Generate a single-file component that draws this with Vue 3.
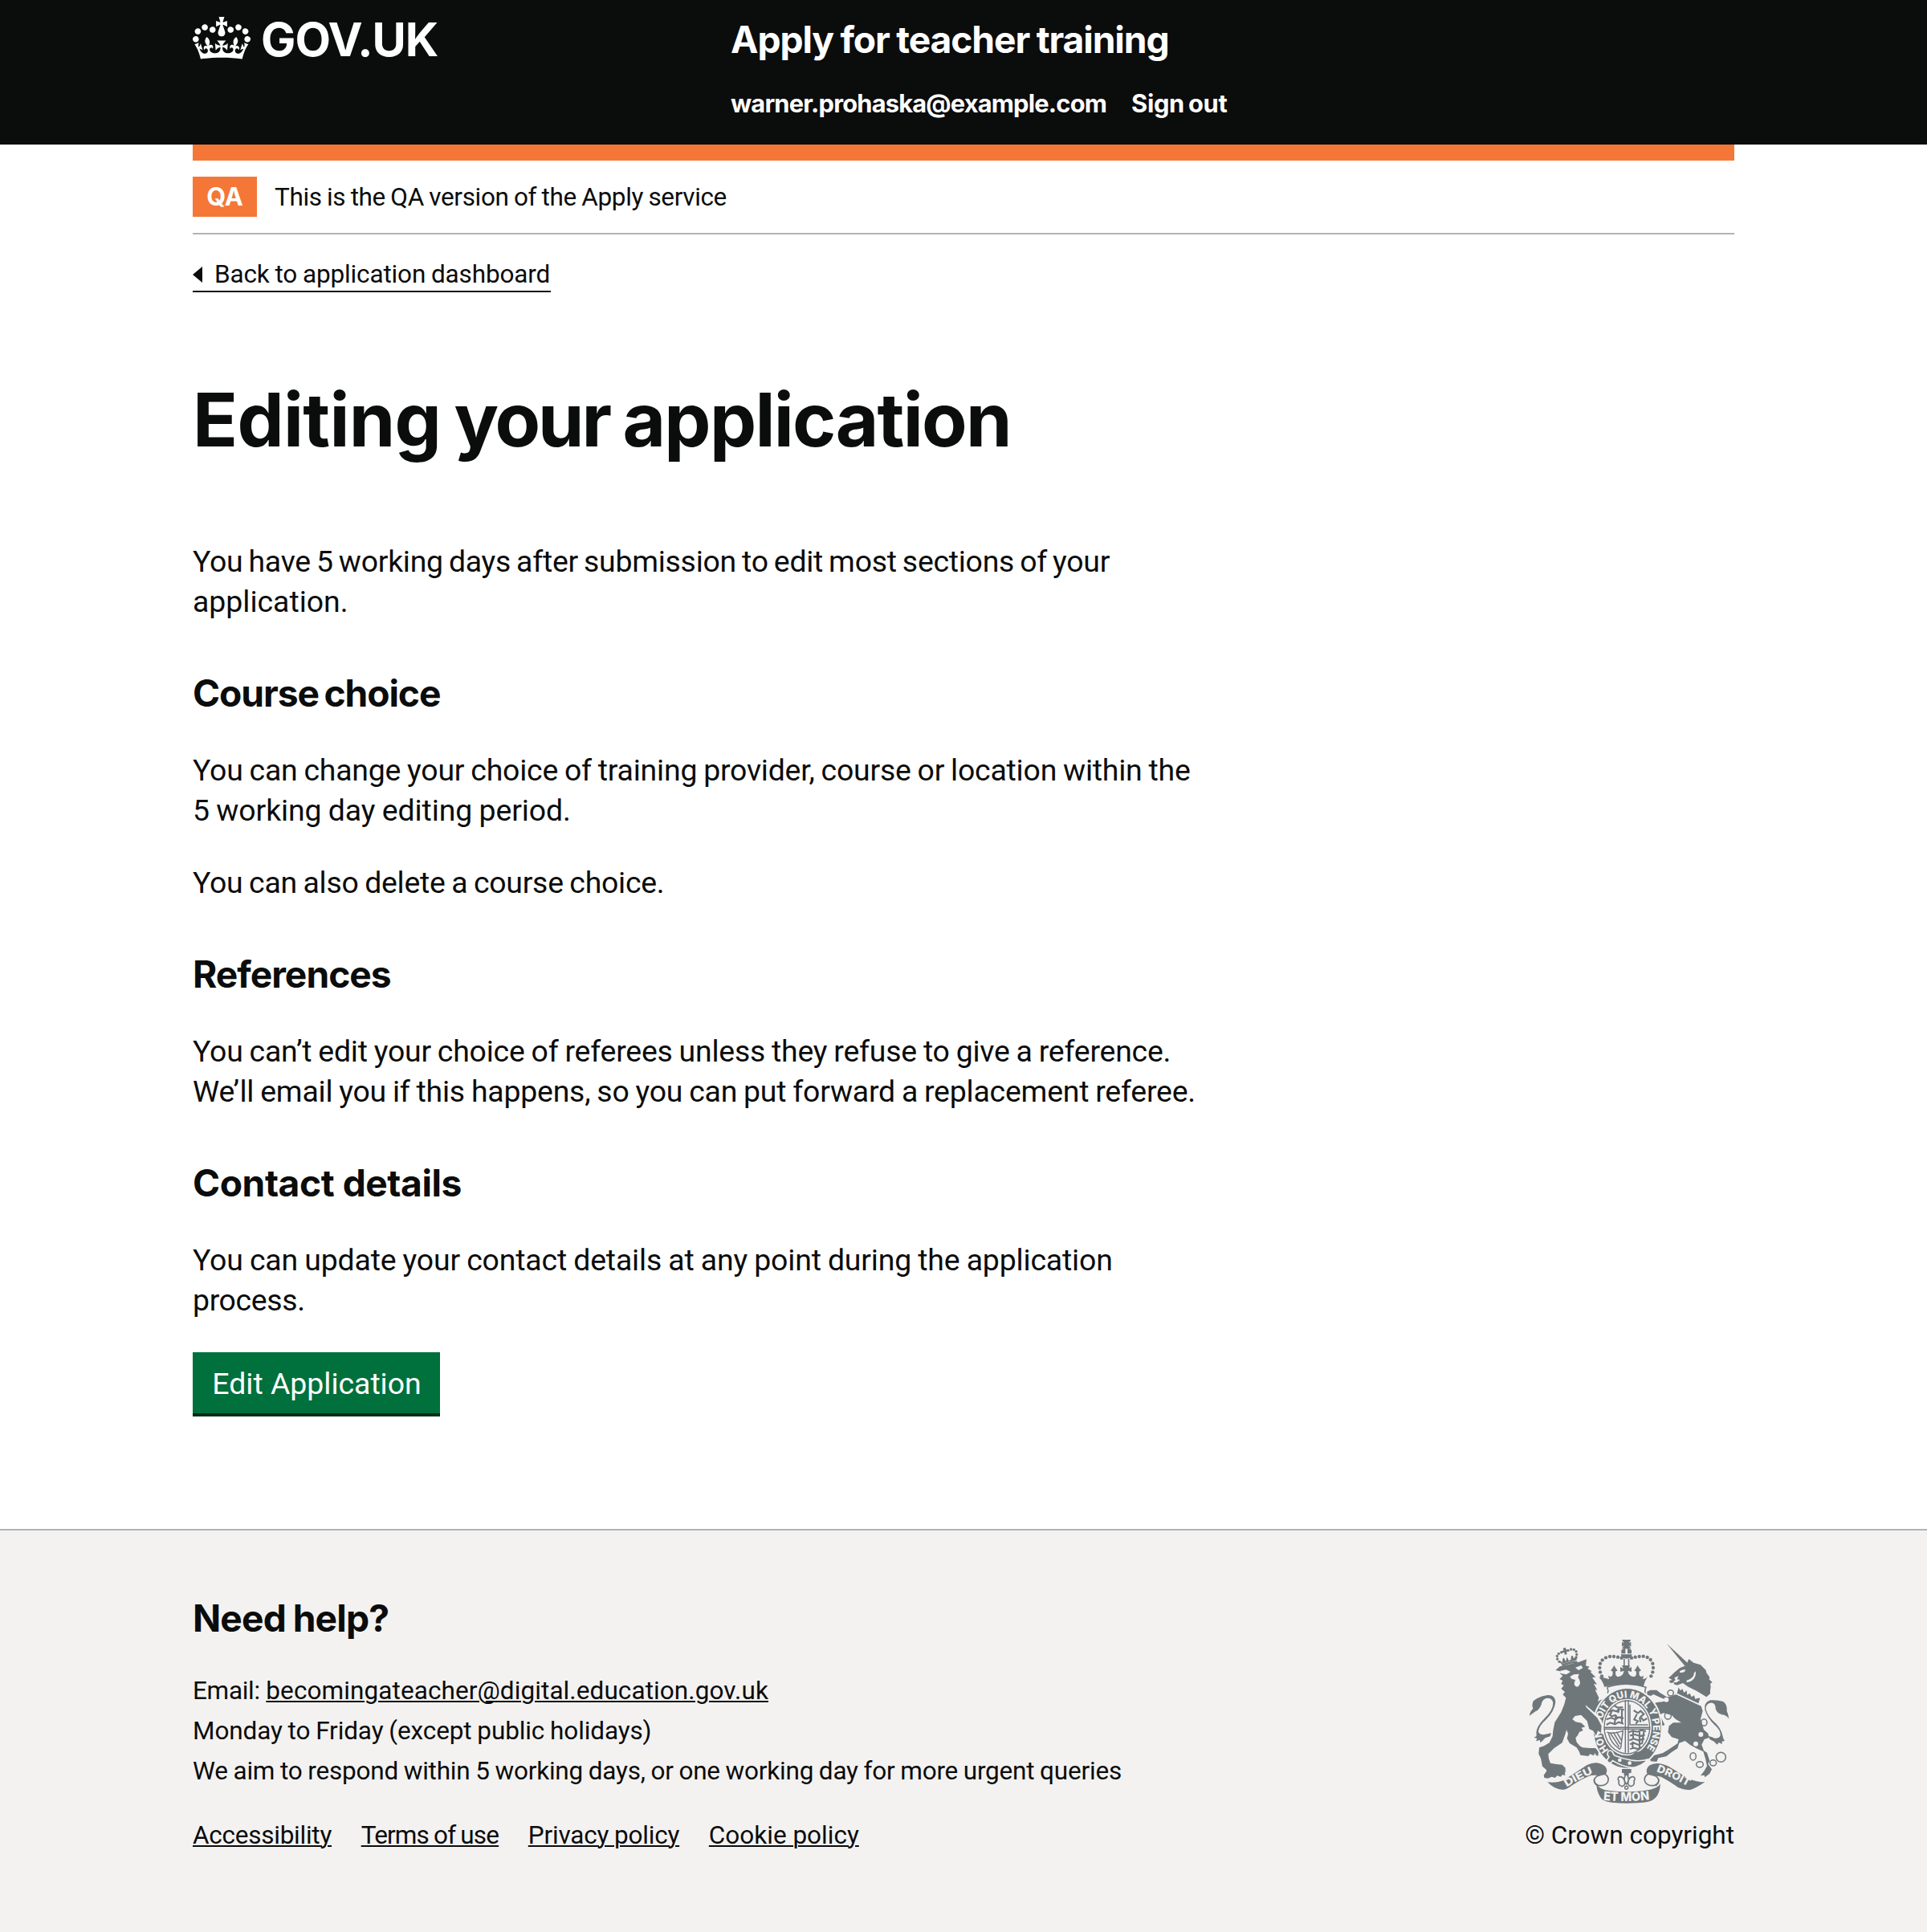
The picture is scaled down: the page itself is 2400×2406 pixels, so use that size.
<script setup>
const footerLinks = [
  { label: 'Accessibility', cls: 'link-accessibility' },
  { label: 'Terms of use', cls: 'link-terms' },
  { label: 'Privacy policy', cls: 'link-privacy' },
  { label: 'Cookie policy', cls: 'link-cookie' }
]

// Pearls along the two arches of the large crown.
const pearls = [
  [345, 202], [339, 187], [337, 171], [339, 155], [347, 142], [360, 133], [375, 129], [390, 129], [405, 131],
  [419, 134], [456, 134], [470, 131], [485, 129], [500, 128], [515, 132], [527, 141], [535, 155], [537, 171], [535, 187], [529, 202]
]
// Pearls of the lion's crown.
const smallPearls = [[186, 148], [179, 138], [178, 127], [184, 118], [194, 113], [219, 106], [230, 102], [241, 103], [249, 110], [251, 121], [249, 132]]
// Links of the unicorn's chain: cx, cy, rx, ry.
const chain = [[602, 265, 11, 11], [592, 350, 12, 13], [727, 375, 11, 13], [686, 502, 11, 14], [711, 532, 13, 11], [761, 526, 12, 11], [790, 505, 18, 18]]
const chainSpots = [[715, 420], [696, 455], [586, 290]]
</script>

<template>
  <div class="page">
    <header class="header">
      <div class="container header-row">
        <a class="logo" href="#">
          <svg class="crown" viewBox="0 0 132 97" aria-hidden="true">
            <path fill="currentColor" fill-rule="evenodd" d="M25 30.2c3.5 1.5 7.7-.2 9.1-3.7 1.5-3.6-.2-7.8-3.9-9.2-3.6-1.4-7.6.3-9.1 3.9-1.4 3.5.3 7.5 3.9 9zM9 39.5c3.6 1.5 7.8-.2 9.2-3.7 1.5-3.6-.2-7.8-3.9-9.1-3.6-1.5-7.6.2-9.1 3.8-1.4 3.5.3 7.5 3.8 9zM4.4 57.2c3.5 1.5 7.7-.2 9.1-3.8 1.5-3.6-.2-7.7-3.9-9.1-3.5-1.5-7.6.3-9.1 3.8-1.4 3.5.3 7.6 3.9 9.1zm38.3-21.4c3.5 1.5 7.7-.2 9.1-3.8 1.5-3.6-.2-7.7-3.9-9.1-3.6-1.5-7.6.3-9.1 3.8-1.3 3.6.4 7.7 3.9 9.1zm64.4-5.6c-3.6 1.5-7.8-.2-9.1-3.7-1.5-3.6.2-7.8 3.8-9.2 3.6-1.4 7.7.3 9.2 3.9 1.3 3.5-.4 7.5-3.9 9zm15.9 9.3c-3.6 1.5-7.7-.2-9.1-3.7-1.5-3.6.2-7.8 3.7-9.1 3.6-1.5 7.7.2 9.2 3.8 1.5 3.5-.3 7.5-3.8 9zm4.7 17.7c-3.6 1.5-7.8-.2-9.2-3.8-1.5-3.6.2-7.7 3.9-9.1 3.6-1.5 7.7.3 9.2 3.8 1.3 3.5-.4 7.6-3.9 9.1zM89.3 35.8c-3.6 1.5-7.8-.2-9.2-3.8-1.4-3.6.2-7.7 3.9-9.1 3.6-1.5 7.7.3 9.2 3.8 1.4 3.6-.3 7.7-3.9 9.1zM69.7 17.7l8.9 4.7V9.3l-8.9 2.8c-.2-.3-.5-.6-.9-.9L72.4 0H59.6l3.5 11.2c-.3.3-.6.5-.9.9l-8.8-2.8v13.1l8.8-4.7c.3.3.6.7.9.9l-5 15.4v.1c-.2.8-.4 1.6-.4 2.4 0 4.1 3.1 7.5 7 8.1h.2c.3 0 .7.1 1 .1.4 0 .7 0 1-.1h.2c4-.6 7.1-4.1 7.1-8.1 0-.8-.1-1.7-.4-2.4V34l-5.1-15.4c.4-.2.7-.6 1-.9zM66 92.8c16.9 0 32.8 1.1 47.1 3.2 4-16.9 8.9-26.7 14-33.5l-9.6-3.4c1 4.9 1.1 7.2 0 10.2-1.5-1.4-3-4.3-4.2-8.7L108.6 76c2.8-2 5-3.2 7.5-3.3-4.4 9.4-10 11.9-13.6 11.2-4.3-.8-6.3-4.6-5.6-7.9 1-4.7 5.7-5.9 8-.5 4.3-8.7-3-11.4-7.6-8.8 7.1-7.2 7.9-13.5 2.1-21.1-8 6.1-8.1 12.3-4.5 20.8-4.7-5.4-12.1-2.5-9.5 6.2 3.4-5.2 7.9-2 7.2 3.1-.6 4.3-6.4 7.8-13.5 7.2-10.3-.9-10.9-8-11.2-13.8 2.5-.5 7.1 1.8 11 7.3L80.2 60c-4.1 4.4-8 5.3-12.3 5.4 1.4-4.4 8-11.6 8-11.6H55.5s6.4 7.2 7.9 11.6c-4.2-.1-8-1-12.3-5.4l1.4 16.4c3.9-5.5 8.5-7.7 10.9-7.3-.3 5.8-.9 12.8-11.1 13.8-7.2.6-12.9-2.9-13.5-7.2-.7-5 3.8-8.3 7.1-3.1 2.7-8.7-4.6-11.6-9.4-6.2 3.7-8.5 3.6-14.7-4.6-20.8-5.8 7.6-5 13.9 2.2 21.1-4.7-2.6-11.9.1-7.7 8.8 2.3-5.5 7.1-4.2 8.1.5.7 3.3-1.3 7.1-5.7 7.9-3.5.7-9-1.8-13.5-11.2 2.5.1 4.7 1.3 7.5 3.3l-4.7-15.4c-1.2 4.4-2.7 7.2-4.3 8.7-1.1-3-.9-5.3 0-10.2l-9.5 3.4c5 6.9 9.9 16.7 14 33.5 14.8-2.1 30.8-3.2 47.7-3.2z" />
          </svg>
          <span class="logo-text">GOV.UK</span>
        </a>
        <div class="header-content">
          <a class="service" href="#">Apply for teacher training</a>
          <nav class="nav">
            <a class="nav-user" href="#">warner.prohaska@example.com</a>
            <a class="nav-out" href="#">Sign out</a>
          </nav>
        </div>
      </div>
    </header>

    <div class="container">
      <div class="bar"></div>
      <div class="phase">
        <strong class="tag">QA</strong>
        <span class="phase-text">This is the QA version of the Apply service</span>
      </div>
      <a class="back" href="#">
        <svg class="back-arrow" viewBox="0 0 12 20" aria-hidden="true"><path d="M0 10 12 0v20z" fill="currentColor" /></svg>
        <span class="back-text">Back to application dashboard</span>
      </a>

      <main>
        <h1>Editing <span class="w-your">your</span> <span class="w-app">application</span></h1>
        <p><span class="lead">You have 5 working days after submission to edit most sections of your</span><br>application.</p>
        <h2 class="h-course">Course choice</h2>
        <p><span class="change">You can change your choice of training provider, course or location within the</span><br><span class="period">5 working day editing period.</span></p>
        <p class="delete">You can also delete a course choice.</p>
        <h2 class="h-ref">References</h2>
        <p class="referees">You can’t edit your choice of referees unless they refuse to give a reference.<br>We’ll email you if this happens, so you can put forward a replacement referee.</p>
        <h2 class="h-contact">Contact details</h2>
        <p><span class="update">You can update your contact details at any point during the application</span><br><span class="process">process.</span></p>
        <button class="button" type="button">Edit Application</button>
      </main>
    </div>

    <footer class="footer">
      <div class="container footer-row">
        <div>
          <h2 class="h-help">Need help?</h2>
          <div class="contact">
            <div class="mail-row">Email: <a class="mail" href="#">becomingateacher@digital.education.gov.uk</a></div>
            <div class="hours">Monday to Friday (except public holidays)</div>
            <div class="aim">We aim to respond within 5 working days, or one working day for more urgent queries</div>
          </div>
          <nav class="links">
            <a v-for="l in footerLinks" :key="l.label" :class="l.cls" href="#">{{ l.label }}</a>
          </nav>
        </div>
        <div class="copyright">
          <svg class="crest" viewBox="72 66 750 612" aria-hidden="true">
            <defs>
              <path id="garter" d="M371 478A97 114 0 1 1 502 484" />
              <path id="dieu" d="M214 617Q262 586 318 562" />
              <path id="droit" d="M548 558Q608 580 670 616" />
              <path id="etmon" d="M350 665Q437 674 528 663" />
            </defs>

            <!-- small crown -->
            <g class="ink">
              <circle v-for="(p, i) in smallPearls" :key="i" :cx="p[0]" :cy="p[1]" r="5" />
              <path d="M200 98l9-3 3 8 6 1 1 5-6 1 2 10-9 2-1-9-7 2-2-6 6-3z" />
              <path d="M186 148l6-2 5 6 2-16 5-2 6 14 5-18 6 14 8-2 2-16 6 1 3 9 8-6 5-4-3 18q-30 3-56 13z" />
              <path d="M195 157q26-10 58-11l2 6q-30 1-58 12z" />
            </g>

            <!-- lion -->
            <g class="ink">
              <path d="M172 180l16-14 72-17 28-10-3 24 14 4-7 7 16 10-6 2 20 20-13 1 18 26-12-2 13 23-8-1 14 30-4 14 18-10 6 4-18 32 12 28 6 22 12 20-3 16-10 8-6 4-8-8-16-4 2-14-14 4-2-20-12-4 12-10-14-8 8-10-18 4-18-4-22 4-10 12 12 10 22 4 14 14-14 4 6 10-14 6-6 12-8 10 4 16 12 14 10 6 28 2 20 0 12 12-2 18-8-4-4-8-4 10-14-6-6 8-30-4-4-12-10-16-26-16-10-18 4-18-6-14-4 14-12 34-30 20-22 22 2 18 6 16 22 4 22 2 12 12 0 18-8-8-12 6-10-6-6 10-14-4-16 6-6-16-14-12-6-30-8-16 2-24 18-6 20-12 12-24 2-22 6-30 24-38 12-30 6-24-12-12 8-10-14-12 10-12-10-6 6-12-12-6 12-12-10-8 6-8z" />
              <path d="M128 572l14-20 26-2 24-2 14 10 2 16-10-4-6 8-14-4-8 8-12-4-14 6-14-2z" />
              <path d="M74 350q4-18 14-26-10-26 14-38 18-10 40-13 28-3 30 26-4 34-36 66-26 22-28 44 2 12 20 12l28-6-4 12-18 6-18 18-3-10-14 4 4-10-12-4q14-2 9-16 0-24 30-54 34-32 33-60-4-18-22-17-18 2-22 24-8 20-22 26z" />
            </g>
            <g class="paper">
              <path d="M190 182l22-4 16 8-16 10-20-4zM246 170l22-8 6 10-16 8z" />
              <path d="M226 204l14-8 20-2-4 12q8 10 8 22-4 14-12 14-10-2-10-14l4-12-14-4z" />
            </g>

            <!-- unicorn -->
            <g class="ink">
              <path d="M587 80l82 76-13 9z" />
              <path d="M600 204l16-16 20-16 24-10 10-24 18 14 26 8 20 20 2 10 12 16-2 8 12 12-8 4 2 12-2 14 0 12-14 12-16-10-24-14-28-14-20-14-22 8-12-4 2-6-14 2-6-8 12-4-14-8z" />
              <path d="M622 270l92 38 8 24-8 30 12 40 16 14 4 16-18 6-10 20 8 22 12 8 10 30-6 12 14 20-8 16-18 14-2-8-14 2 14-18 10-18-6-28-8-26-26-12-24-14-18-14-22 8-6 20-22 14-20 16-30 6-6 14-22-2-4-10 16-12 32-8 20-12 36-24 4-16-26-8-14-18 4-24 16-12 30 0-22-14-14-14-30-8-20 8 12 12 12 24-8 4-12-10-14-6 2-10-12-10 6-14 0-10-14-8-4 8 4 14-8-10 2-18 8-8 22-6 20-2 16-6-24-10-26-12-10 6-14-4 0-12 12-6 24 0 12 10 26 16 14-2z" />
              <path d="M820 362q-2-18-8-30 2-28-16-36-20-6-46-4-24 8-20 36 10 32 36 56 24 20 22 40-4 12-22 10-12-6-22-8l4 12 16 8 12 12 6-8 12 6 0-10 10-2q-6-8-8-20-4-24-26-46-30-26-36-52-2-20 16-24 20-2 20 22 6 18 24 22 18 2 26 16z" />
            </g>
            <g class="paper">
              <path d="M628 238l102 48-14 28-94-44z" />
              <path d="M636 184q10-8 22-6l-4 8q-10 4-18 2zM616 208l16-6-6 12 12 2-14 10-12-2 8-8z" />
              <path d="M662 218q26-6 28-28l6-6q2 36-34 42z" />
              <circle v-for="(c, i) in chainSpots" :key="i" :cx="c[0]" :cy="c[1]" r="9" />
            </g>
            <g class="ink">
              <path d="M632 244l6 12 8-6 6 14 10-8 2 16 10-6 6 14 10-6 4 14 10-4 8 0-6 20-80-38z" />
            </g>
            <g class="chain">
              <ellipse v-for="(c, i) in chain" :key="i" :cx="c[0]" :cy="c[1]" :rx="c[2]" :ry="c[3]" />
            </g>

            <!-- royal crown -->
            <g class="ink">
              <path d="M420 66h34l-8 13 8-5v18l-8-5 8 13h-34l8-13-8 5V74l8 5z" />
              <path d="M418 104q8-5 15-6v20h-15zM441 98q8 1 15 6v14h-15zM416 121h42q-2 16-21 16t-21-16zM426 138h5v38h-5zM443 138h5v38h-5z" />
              <circle v-for="(p, i) in pearls" :key="i" :cx="p[0]" :cy="p[1]" r="6.5" />
              <path d="M346 206l14 4 12 4-3-14 9 5 7-6 1-14-8-4 6-7 7-12 7 12 6 7-8 4 1 14 7 6 12-3 8-8 4-12-14 4v-18l12 6-6-12h30l-6 12 12-6v18l-14-4 4 12 8 8 12 3 7-6 1-14-8-4 6-7 7-12 7 12 6 7-8 4 1 14 7 6 9-5-3 14 12-4 6-6q-12 18-16 38-70-18-146 0-4-20-20-36z" />
            </g>
            <path class="line" d="M364 244q73-24 146 0-6 12-2 22M364 244q8 12 2 22" />

            <!-- garter and shield -->
            <ellipse class="paper" cx="440" cy="397" rx="132" ry="154" />
            <ellipse class="ink" cx="440" cy="397" rx="126" ry="148" />
            <ellipse class="paper" cx="439" cy="393" rx="92" ry="106" />
            <ellipse class="ink" cx="439" cy="393" rx="87" ry="101" />
            <ellipse class="paper" cx="439" cy="393" rx="83" ry="97" />
            <path class="line" d="M433 292v196M444 292v196M352 394h174M352 400h174" />
            <g class="blot">
              <path d="M368 336l18-6 14 4 10-10 18 4M372 344l10 8 14-4 8 10 20-4M362 364l18-6 16 6 12-8 18 4M362 384l14-8 18 6 14-8 18 6M392 312l12 8 20-2M384 326l-6 18M410 320l-4 20M398 350l-6 30M420 330v48" />
              <path d="M446 412l14-6 18 4 14-6 18 4M450 424l20-4 16 6 20-4M448 442l16-6 18 6 22-6M450 456l16-4 14 6 18-6M450 474l14-4 16 4 12-6M462 406v30M486 410v60M502 410l-6 40M460 446v28" />
              <path d="M464 330l16 10 10-8 12 12-12 10 10 14 14-8M476 344l-10 20 14 6-8 10M486 356l4 18" />
            </g>
            <path class="line" d="M450 308v76h68M364 412q24 8 60-6l-8 62q-4 12-10 2-26-16-36-54M376 414l34 52M388 412l26 44M400 410l18 32" />
            <path class="ink" d="M424 496q20 14 46-10l26-4-22 20q-20 12-46 4z" />
            <text class="motto m-garter"><textPath href="#garter" textLength="500" lengthAdjust="spacingAndGlyphs">HONI SOIT QUI MAL Y PENSE</textPath></text>
            <path class="buckle" d="M384 484q-10-8-16 0l-2 12 6 8-8 12q2 12 14 10l8-8q34 22 72 26 34-2 62-32-30 10-66 4-34-6-62-18z" />
            <circle class="paper" cx="412" cy="516" r="7" /><circle class="paper" cx="449" cy="527" r="7" />
            <path class="paper" d="M284 310l50 42 18 34-2 34-16-8-8 22-14-26z" />
            <path class="ink" d="M250 318l34-2 44 42 16 30-2 26-12-8-6 18-12-18-14-6-8-30-30-30z" />

            <!-- ribbons -->
            <path class="ink" d="M142 598q36 4 62-8l86-56q36-18 64 2 18 14 4 36l-14 4q-30-8-48 0-30 12-62 34-20 16-32 16-32 2-60-28z" />
            <path class="ink" d="M730 598q-30 0-62-14l-72-44q-46-22-74-4-16 14-6 34l14 6q22-2 36 2 38 20 64 40 30 12 48 8 16-4 52-28z" />
            <path class="curl" d="M312 562q20 14 44 6 20 12 10 32-12 14-34 10-20-8-14-24 6-12 22-14M562 562q-20 14-44 6-20 12-10 32 12 14 34 10 20-8 14-24-6-12-22-14" />
            <path class="line" d="M318 584q-6 14 10 28M556 584q6 14-10 28" />
            <path class="ink" d="M326 604q10 24 48 26 62 8 128 0 52-6 62-26-2 34-16 50-16 18-48 20-62 6-118 0-36-2-44-22-14-26-12-48z" />
            <path class="ink" d="M420 549h35v14l-9 2v8h-18v-8l-8-2z" />
            <path class="fleur" d="M437 566q-12 16-6 30 3 8 6 10 3-2 6-10 6-14-6-30zM431 598q-4-22-20-20-10 6-2 16-4 16 12 20 8-2 10-10zM443 598q4-22 20-20 10 6 2 16 4 16-12 20-8-2-10-10z" />
            <circle class="chain" cx="437" cy="619" r="6" />
            <text class="motto"><textPath href="#dieu" textLength="112" lengthAdjust="spacingAndGlyphs">DIEU</textPath></text>
            <text class="motto"><textPath href="#droit" textLength="132" lengthAdjust="spacingAndGlyphs">DROIT</textPath></text>
            <text class="motto m-big"><textPath href="#etmon" textLength="174" lengthAdjust="spacingAndGlyphs">ET MON</textPath></text>
          </svg>
          <span>© Crown copyright</span>
        </div>
      </div>
    </footer>
  </div>
</template>

<style>
body {
  margin: 0;
  background: #fff;
}
</style>

<style scoped>
.page {
  width: 2400px;
  height: 2406px;
  display: flex;
  flex-direction: column;
  background: #fff;
  color: #0b0c0c;
  font-family: Roboto, "Liberation Sans", sans-serif;
  font-size: 37.4px;
  line-height: 50px;
}
.container {
  width: 1920px;
  margin: 0 auto;
}
h1, h2, .service, .nav, .tag, .logo-text {
  font-family: Inter, "Liberation Sans", sans-serif;
  font-weight: 700;
}
a {
  color: inherit;
  white-space: nowrap;
}
.header {
  height: 180px;
  background: #0b0c0c;
  color: #fff;
}
.header a {
  text-decoration: none;
}
.header-row {
  display: flex;
}
.logo {
  width: 670px;
  display: flex;
  align-items: flex-start;
  gap: 13px;
}
.crown {
  width: 72px;
  height: 53px;
  margin-top: 21px;
}
.logo-text {
  margin-top: 19px;
  font-size: 57.8px;
  line-height: 60px;
  letter-spacing: -1px;
}
.header-content {
  display: flex;
  flex-direction: column;
  gap: 30px;
  padding-top: 19px;
}
.service {
  font-size: 46.2px;
  line-height: 60px;
  letter-spacing: -1.1px;
  word-spacing: -1.3px;
}
.nav {
  display: flex;
  gap: 31px;
  font-size: 30.8px;
  line-height: 40px;
}
.nav-user {
  letter-spacing: -0.8px;
}
.nav-out {
  letter-spacing: -0.3px;
  word-spacing: -2px;
}
.bar {
  height: 20px;
  background: #f47738;
}
.phase {
  display: flex;
  align-items: center;
  gap: 22px;
  height: 50px;
  padding: 20px 0;
  border-bottom: 2px solid #b1b4b6;
  font-size: 31.5px;
}
.tag {
  width: 80px;
  background: #f47738;
  color: #fff;
  font-size: 30.8px;
  text-align: center;
}
.phase-text {
  padding-top: 2px;
  letter-spacing: -0.35px;
  word-spacing: -1.07px;
}
.back {
  display: flex;
  align-items: flex-start;
  width: 446px;
  height: 41px;
  margin-top: 29px;
  border-bottom: 2px solid #0b0c0c;
  font-size: 31.5px;
  line-height: 40px;
  text-decoration: none;
}
.back-arrow {
  flex: none;
  width: 12px;
  height: 20px;
  margin: 11px 15px 0 0;
}
.back-text {
  padding-top: 1px;
  letter-spacing: -0.15px;
  word-spacing: -0.8px;
}
h1 {
  margin: 108px 0 102px;
  font-size: 92.4px;
  line-height: 100px;
  letter-spacing: -0.7px;
  word-spacing: -5px;
}
.w-your {
  letter-spacing: -3px;
}
.w-app {
  letter-spacing: -1.7px;
}
h2 {
  margin: 59px 0 41px;
  font-size: 46.2px;
  line-height: 60px;
}
p {
  margin: 0 0 40px;
}
.h-course {
  letter-spacing: -1.1px;
  word-spacing: -3.2px;
}
.h-ref {
  letter-spacing: -1px;
}
.h-contact {
  letter-spacing: -0.45px;
}
.h-help {
  letter-spacing: -0.83px;
  word-spacing: -1.5px;
}
.lead {
  letter-spacing: -0.25px;
  word-spacing: -1.95px;
}
.change {
  letter-spacing: -0.2px;
  word-spacing: -1.15px;
}
.period {
  letter-spacing: -0.1px;
  word-spacing: -0.75px;
}
.delete {
  letter-spacing: -0.25px;
  word-spacing: -1.4px;
}
.referees {
  letter-spacing: -0.2px;
  word-spacing: -1.14px;
}
.update {
  letter-spacing: -0.15px;
  word-spacing: -0.95px;
}
.process {
  letter-spacing: -0.35px;
}
.button {
  display: block;
  width: 308px;
  height: 80px;
  padding: 1px 0 3px 1px;
  border: 0;
  background: #00703c;
  box-shadow: inset 0 -4px 0 #002d18;
  color: #fff;
  font: inherit;
}
.footer {
  flex: 1;
  margin-top: 140px;
  border-top: 2px solid #b1b4b6;
  background: #f3f2f1;
  font-size: 31.5px;
}
.footer-row {
  display: flex;
  justify-content: space-between;
  padding-top: 79px;
}
.footer h2 {
  margin: 0 0 36px;
}
.contact {
  margin-bottom: 30px;
}
.mail, .links a {
  text-decoration: underline;
  text-decoration-thickness: 2px;
  text-underline-offset: 2px;
}
.mail-row {
  letter-spacing: -0.3px;
}
.mail {
  letter-spacing: 0.09px;
}
.hours {
  letter-spacing: -0.12px;
  word-spacing: -0.8px;
}
.aim {
  letter-spacing: -0.2px;
  word-spacing: -0.92px;
}
.links {
  display: flex;
  gap: 36.7px;
}
.link-accessibility {
  letter-spacing: -0.25px;
}
.link-terms {
  letter-spacing: -0.85px;
  word-spacing: -0.9px;
}
.link-privacy {
  letter-spacing: -0.2px;
  word-spacing: -0.8px;
}
.copyright {
  display: flex;
  flex-direction: column;
  align-items: flex-end;
  padding-top: 57px;
}
.crest {
  width: 250px;
  height: 204px;
  margin: 0 6px 15px 0;
  overflow: visible;
}
.ink {
  fill: #6f777b;
}
.paper {
  fill: #f3f2f1;
}
.buckle {
  fill: #6f777b;
  stroke: #f3f2f1;
  stroke-width: 5;
}
.curl, .fleur {
  fill: #f3f2f1;
  stroke: #6f777b;
  stroke-width: 5;
}
.line, .chain, .blot {
  fill: none;
  stroke: #6f777b;
  stroke-width: 4.5;
}
.blot {
  stroke-width: 6.5;
}
.motto {
  fill: #f3f2f1;
  font: 800 39px Inter, "Liberation Sans", sans-serif;
}
.m-garter {
  font-size: 37px;
}
.m-big {
  font-size: 46px;
}
</style>
